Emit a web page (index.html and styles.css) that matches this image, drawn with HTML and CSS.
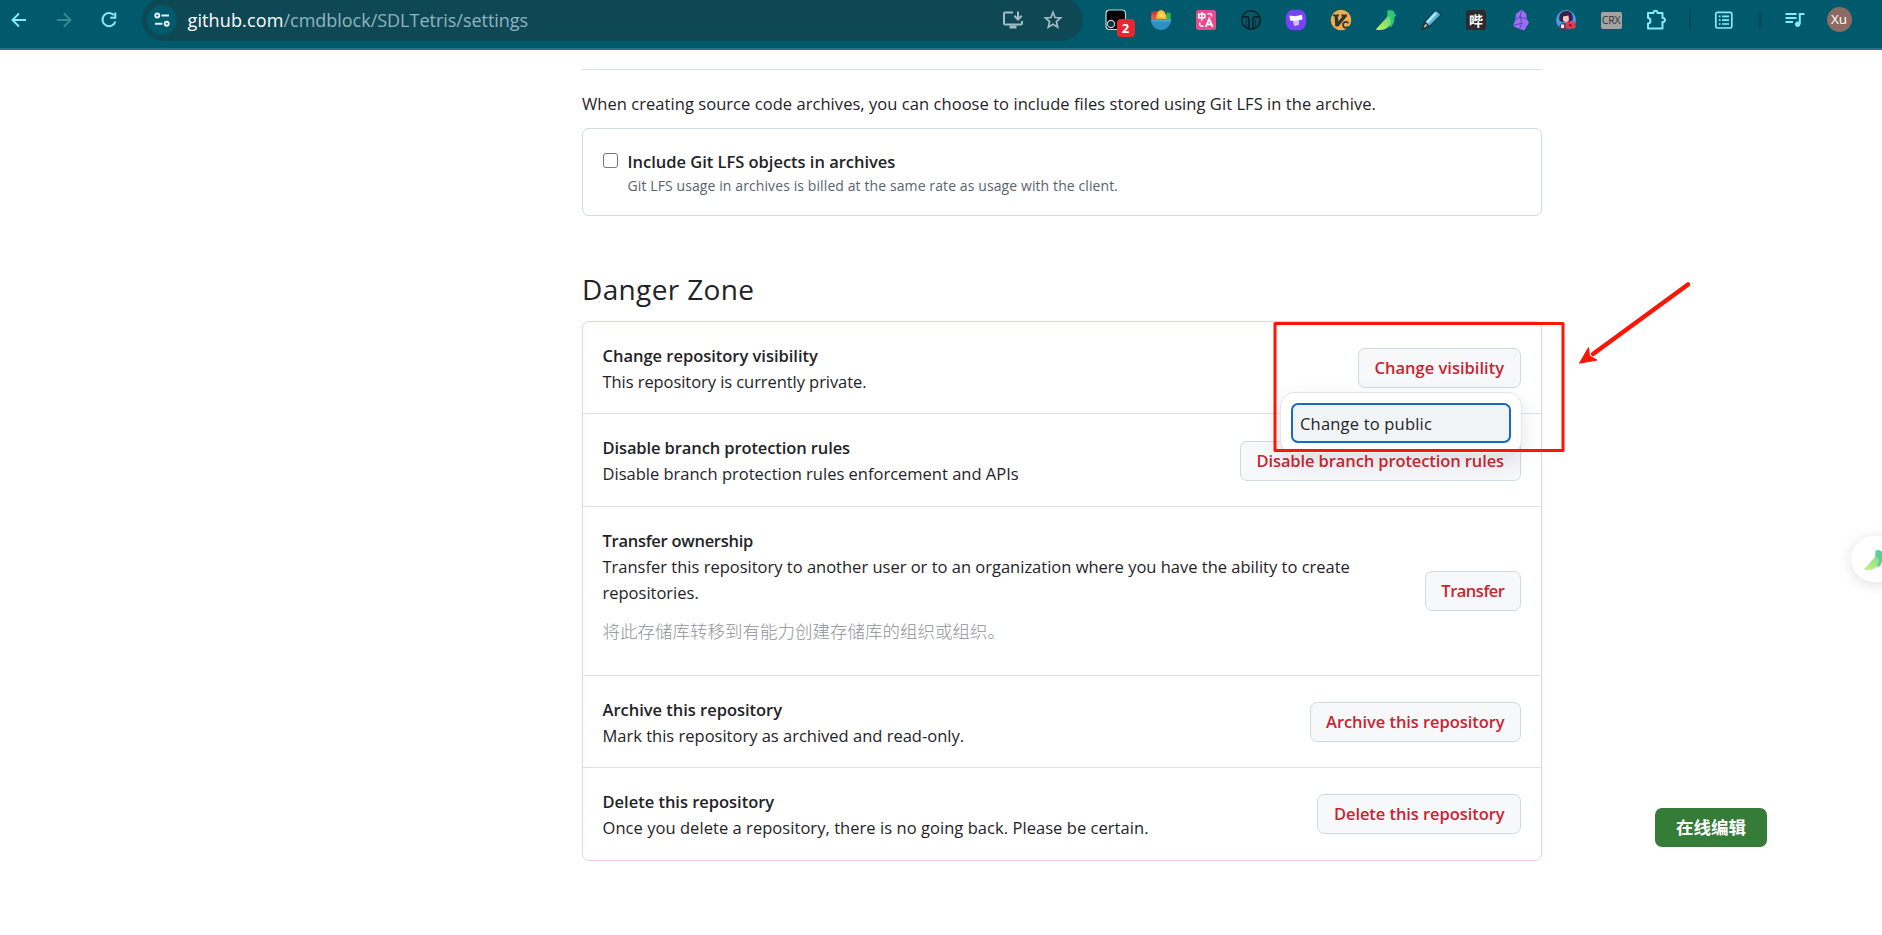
FILE: index.html
```html
<!DOCTYPE html>
<html lang="en">
<head>
<meta charset="utf-8">
<title>cmdblock/SDLTetris settings</title>
<link rel="stylesheet" href="styles.css">
</head>
<body>
<header class="toolbar">
  <nav class="nav">
    <span class="slot"><svg width="20" height="20" viewBox="0 0 20 20" fill="none" stroke="#86ebf8" stroke-width="1.9"><path d="M17 10H4M10 3.500L3.500 10L10 16.500"/></svg></span>
    <span class="slot"><svg width="20" height="20" viewBox="0 0 20 20" fill="none" stroke="#3b8794" stroke-width="1.900"><path d="M3 10H16M10 3.500L16.500 10L10 16.500"/></svg></span>
    <span class="slot"><svg width="20" height="20" viewBox="0 0 20 20" fill="none" stroke="#86ebf8" stroke-width="2"><path d="M15 5.200A6.600 6.600 0 1 0 16.400 11.500"/><path d="M16.300 2.600V7.700H11.200"/></svg></span>
  </nav>
  <div class="omnibox">
    <span class="chip"><svg width="18" height="18" viewBox="0 0 18 18" fill="none" stroke="#e6f6f8" stroke-width="1.900"><circle cx="4.300" cy="4.500" r="2"/><path d="M8.500 4.500H16M2 12.800H9.500"/><circle cx="13.700" cy="12.800" r="2"/></svg></span>
    <span class="url"><span class="host">github.com</span><span class="path">/cmdblock/SDLTetris/settings</span></span>
    <span class="omni-actions">
      <svg width="22" height="20" viewBox="0 0 22 20" fill="none" stroke="#a5bcc7" stroke-width="2"><path d="M11 2.600H3.200Q2 2.600 2 3.800V13.300Q2 14.500 3.200 14.500H18.800Q20 14.500 20 13.300V11M16 1.500V9M12.300 5.800L16 9.500L19.700 5.800"/><path d="M7.500 17H14.500" stroke-width="3"/></svg>
      <svg width="20" height="20" viewBox="0 0 20 20" fill="none" stroke="#a5bcc7" stroke-width="1.700"><path d="M10 2.300L12.100 7.500L17.600 8L13.400 11.600L14.700 17.100L10 14.200L5.300 17.100L6.600 11.600L2.400 8L7.900 7.500Z"/></svg>
    </span>
  </div>
  <div class="extensions">
    <span class="slot tamper">
      <svg width="22" height="22" viewBox="0 0 22 22"><rect x="1" y="1" width="19.500" height="19.500" rx="3.500" fill="#000" stroke="#c8d6da" stroke-width="1.200"/><circle cx="6" cy="15" r="3.600" fill="#0b3038" stroke="#b9d0d6" stroke-width="1.200"/></svg>
      <span class="badge">2</span>
    </span>
    <span class="slot"><svg width="22" height="22" viewBox="0 0 22 22"><path d="M1.200 3L6 2L9 5L8 11H1.800Z" fill="#c4403c"/><circle cx="3.500" cy="8" r="2.500" fill="#e0564c"/><path d="M14 10L18 2.500L19 4.500L21 4L20.500 11H14Z" fill="#36b34a"/><path d="M6 10Q6 1.500 11 1Q16.500 1.500 16.500 10Z" fill="#fbb829"/><path d="M8.500 8Q8.500 4 11.500 3.500Q14.500 4 14.500 8Z" fill="#ffd768"/><path d="M1 10.500H21C21 16.500 16.500 21 11 21S1 16.500 1 10.500Z" fill="#2e8fc0"/><path d="M1 10.500H21L20.700 12.500H1.300Z" fill="#4ba7d2"/></svg></span>
    <span class="slot"><svg width="22" height="22" viewBox="0 0 22 22"><rect x="1" y="1" width="20" height="20" rx="2.500" fill="#e54b8d"/><g fill="none" stroke="#fff" stroke-width="1.500"><path d="M3.800 5.300H9.700V8.700H3.800ZM6.750 3V11.800M12.500 4.800H15.200Q16.700 4.800 16.700 7.500M4.800 13.500V15.500Q4.800 17.500 8.500 17.300"/><path d="M10.700 18L14.200 9.800L17.700 18M12 15.300H16.500" stroke-width="1.800"/></g></svg></span>
    <span class="slot"><svg width="22" height="22" viewBox="0 0 22 22" fill="none" stroke="#0c1c20" stroke-width="1.500"><circle cx="11" cy="11" r="9.200"/><path d="M2.500 7.800H7Q9 7.800 9 10V20M19.500 7.800H15Q13 7.800 13 10V20"/><path d="M5.500 9.500Q6.500 10 6.500 12V18M16.500 9.500Q15.500 10 15.500 12V18" stroke-width=".7"/></svg></span>
    <span class="slot"><svg width="22" height="22" viewBox="0 0 22 22"><rect x=".8" y=".8" width="20.400" height="20.400" rx="7.500" fill="#7643f5"/><path d="M4.500 6.500L10 7.200L17 5.800L17.500 10.500L13.800 11.200L13.500 16L9 16.500L8.500 12L5 11.500Z" fill="#fff"/><path d="M8.500 11.800L13.800 11.200L13.500 16L9 16.500Z" fill="#cdbbfb"/></svg></span>
    <span class="slot"><svg width="22" height="22" viewBox="0 0 22 22"><circle cx="11" cy="11" r="10.300" fill="#f0ad4b"/><path d="M2.800 5.500H9V7.300H8L8.300 12.500L12.500 7.300H11.300V5.500H17V7.300L8.300 17.500H5.300L4.500 7.300H2.800Z" fill="#2b3a36"/><path d="M18.300 14.200A2.900 2.900 0 1 0 18.300 17.500" fill="none" stroke="#2b3a36" stroke-width="1.800"/></svg></span>
    <span class="slot"><svg width="22" height="22" viewBox="0 0 22 22"><use href="#bird"/></svg></span>
    <span class="slot"><svg width="22" height="22" viewBox="0 0 22 22"><path d="M4.500 13L14.500 2.200Q16 1 17.500 2.200L20 4.500Q21 5.800 20 7L9.500 17.500Z" fill="#52b6dc" stroke="#17394b" stroke-width="1.200"/><path d="M7 13.500L16 4" stroke="#bdeaf7" stroke-width="2.500"/><path d="M4.500 13L9.500 17.500L5 19.500L1.500 20.500L3 17Z" fill="#3f4a4c" stroke="#132d33"/><path d="M4.500 18L6.500 15.500" stroke="#c9c9bd" stroke-width="1.500"/></svg></span>
    <span class="slot"><span class="bili">哔</span></span>
    <span class="slot"><svg width="22" height="22" viewBox="0 0 22 22"><path d="M11.500 .5L16.500 5L16.500 9.500L19 13.500L14.500 21.200L9 20L3 17L5.300 10.500L6 5Z" fill="#9c6cf5"/><path d="M11.500 1L10 8L5.500 10.500M10 8L16.500 10M10 8L12 14L9.500 20M3.500 16.500L12 14" stroke="#4a3f9c" stroke-width=".8" fill="none"/></svg></span>
    <span class="slot"><svg width="22" height="22" viewBox="0 0 22 22"><circle cx="11" cy="11" r="10" fill="#4a98e6"/><path d="M4.500 11.500C3 4.500 8 1.500 12 2C17 2.500 18.500 7 17.500 11.500L14 13H7Z" fill="#3c1f45"/><path d="M8 7.500L13.500 6.500L14 11.500Q11 14.500 8 11.500Z" fill="#f6c6b8"/><path d="M4 19.500Q4 14 8.500 14H13L14 20.500Q9 22.500 4 19.500Z" fill="#5b3a68"/><path d="M6 15.500H9V19H6Z" fill="#eee"/><rect x="10.500" y="13" width="10" height="6.500" rx="1" fill="#e23a4e"/><path d="M14.300 14.500L17 16.200L14.300 18Z" fill="#3c1f45"/></svg></span>
    <span class="slot"><span class="crx">CRX</span></span>
    <span class="slot"><svg width="22" height="22" viewBox="0 0 22 22" fill="none" stroke="#86ebf8" stroke-width="2" stroke-linejoin="round"><path d="M3 4H8.500C8.300 1 12.700 1 12.500 4H17.500V9C20.800 8.800 20.800 13.200 17.500 13V19.500H3V14.500C6.300 14.500 6.300 9 3 9Z"/></svg></span>
  </div>
  <span class="divider"></span>
  <span class="tool"><svg width="20" height="20" viewBox="0 0 20 20" fill="none" stroke="#86ebf8" stroke-width="1.700"><rect x="1.800" y="2.300" width="16" height="15.700" rx="1.500"/><path d="M4.800 6.300H6.500M8 6.300H15M4.800 10.200H6.500M8 10.200H15M4.800 14H6.500M8 14H15"/></svg></span>
  <span class="divider"></span>
  <span class="tool music"><svg width="20" height="18" viewBox="0 0 20 18" fill="none" stroke="#86ebf8" stroke-width="2"><path d="M.5 3H11.500M.5 7H11.500M.5 11H8M14.800 13V3H19.500"/><circle cx="12.700" cy="13.200" r="2.300" fill="#86ebf8" stroke-width="1"/></svg></span>
  <span class="avatar">Xu</span>
  <span class="more"><i></i><i></i><i></i></span>
</header>

<main class="page">
  <hr class="rule">
  <p class="intro">When creating source code archives, you can choose to include files stored using Git LFS in the archive.</p>
  <section class="lfs">
    <span class="checkbox"></span>
    <div>
      <div class="title">Include Git LFS objects in archives</div>
      <div class="note">Git LFS usage in archives is billed at the same rate as usage with the client.</div>
    </div>
  </section>

  <h2 class="heading">Danger Zone</h2>
  <section class="danger">
    <div class="row">
      <div class="info">
        <div class="title">Change repository visibility</div>
        <div class="desc snug">This repository is currently private.</div>
      </div>
      <div class="menu-anchor">
        <button class="btn wide">Change visibility</button>
        <div class="menu"><div class="menu-item">Change to public</div></div>
      </div>
    </div>
    <div class="row low">
      <div class="info">
        <div class="title tight">Disable branch protection rules</div>
        <div class="desc">Disable branch protection rules enforcement and APIs</div>
      </div>
      <button class="btn wide">Disable branch protection rules</button>
    </div>
    <div class="row">
      <div class="info">
        <div class="title tighter">Transfer ownership</div>
        <div class="desc">Transfer this repository to another user or to an organization where you have the ability to create repositories.</div>
        <div class="translation" lang="zh">将此存储库转移到有能力创建存储库的组织或组织。</div>
      </div>
      <button class="btn tightest">Transfer</button>
    </div>
    <div class="row">
      <div class="info">
        <div class="title">Archive this repository</div>
        <div class="desc">Mark this repository as archived and read-only.</div>
      </div>
      <button class="btn">Archive this repository</button>
    </div>
    <div class="row">
      <div class="info">
        <div class="title">Delete this repository</div>
        <div class="desc loose">Once you delete a repository, there is no going back. Please be certain.</div>
      </div>
      <button class="btn">Delete this repository</button>
    </div>
  </section>
</main>

<svg class="annotation" width="430" height="180" viewBox="0 0 430 180">
  <rect x="4" y="43.500" width="288" height="127" fill="none" stroke="#fb1505" stroke-width="3" stroke-linejoin="round"/>
  <path d="M417 4.500L322 74" stroke="#fb1505" stroke-width="4.500" stroke-linecap="round"/>
  <path d="M308.500 83.200L317.500 67.500L318.500 76L326 80Z" fill="#fb1505" stroke="#fb1505"/>
</svg>

<div class="bubble">
  <svg width="22" height="22" viewBox="0 0 22 22">
    <defs>
      <linearGradient id="leaf" x1="0" y1="1" x2="1" y2="0"><stop offset="0" stop-color="#c6ee6b"/><stop offset="1" stop-color="#5fd96c"/></linearGradient>
      <g id="bird"><path d="M12.500 1.200H16Q19 1.200 19.500 4.500L21.200 6.500L19.300 8.500Q19.800 15 15 18.500L12 12Z" fill="#2cc877"/><path d="M.8 20.500L13 7Q17 9.500 15.500 14.500Q13 21 5.500 21Q2 21 .8 20.500Z" fill="url(#leaf)"/></g>
    </defs>
    <use href="#bird"/>
  </svg>
</div>
<button class="edit-online" lang="zh">在线编辑</button>
</body>
</html>
```
FILE: styles.css
```css
* { box-sizing: border-box; }
body {
  margin: 0;
  height: 935px;
  overflow: hidden;
  background: #fff;
  color: #1f2328;
  font: 16.5px/26px "Open Sans", "Noto Sans CJK SC", sans-serif;
  position: relative;
}
p, h2 { margin: 0; }
svg { display: block; flex: none; }

/* browser toolbar */
.toolbar {
  display: flex;
  height: 50px;
  padding-bottom: 9px;
  align-items: center;
  background: #005a6b;
  border-bottom: 2px solid #2a7487;
  overflow: hidden;
}
.nav, .extensions { display: flex; flex: none; }
.nav { margin-left: -4px; }
.slot {
  flex: none;
  display: flex;
  width: 45px;
  height: 22px;
  align-items: center;
  justify-content: center;
}
.extensions { margin-left: 10.5px; padding-top: 1px; }
.omnibox {
  display: flex;
  flex: none;
  align-items: center;
  width: 941px;
  height: 43px;
  margin-left: 11px;
  padding: 0 20px 0 5px;
  border-radius: 22px;
  background: #0e4855;
}
.chip {
  display: flex;
  width: 30px;
  height: 30px;
  align-items: center;
  justify-content: center;
  border-radius: 50%;
  background: #005a6b;
}
.url { margin-left: 10.5px; font-size: 18px; white-space: nowrap; }
.host { color: #fff; letter-spacing: .13px; }
.path { color: #8fb4c0; letter-spacing: -.02px; }
.omni-actions { display: flex; gap: 19px; margin-left: auto; align-items: center; }

.tamper { position: relative; }
.badge {
  position: absolute;
  left: 23px;
  top: 10px;
  width: 18px;
  height: 18px;
  border-radius: 4px;
  background: #e8282e;
  color: #fff;
  font-weight: 700;
  font-size: 13px;
  line-height: 18px;
  text-align: center;
}
.bili {
  width: 20px;
  height: 20px;
  border-radius: 3px;
  background: #2d2a2c;
  color: #fff;
  font: 700 14px/20px "Noto Sans CJK SC", sans-serif;
  text-align: center;
}
.crx {
  width: 21px;
  height: 17px;
  border-radius: 2px;
  background: #a3a3a3;
  color: #333;
  font-size: 10.5px;
  line-height: 17px;
  letter-spacing: -.2px;
  text-align: center;
}
.divider { flex: none; width: 2px; height: 20px; margin-left: 10px; background: #0e4855; }
.tool { display: flex; flex: none; margin-left: 23px; }
.tool + .divider { margin-left: 25px; }
.music { margin-left: 24px; }
.avatar {
  flex: none;
  width: 25px;
  height: 25px;
  margin-left: 22px;
  border-radius: 50%;
  background: #8d6b62;
  color: #fff;
  font-size: 13.5px;
  line-height: 25px;
  text-align: center;
}
.more { display: grid; flex: none; gap: 4px; margin-left: 30px; }
.more i { width: 3px; height: 3px; border-radius: 50%; background: #86ebf8; }

/* settings page */
.page { width: 960px; margin-left: 582px; padding-top: 19px; }
.rule { height: 1px; margin: 0; border: 0; background: #d8dee4; }
.intro { margin-top: 21px; letter-spacing: .053px; }
.lfs {
  display: flex;
  height: 88px;
  margin-top: 11px;
  padding: 20px;
  border: 1px solid #d1d9e0;
  border-radius: 7px;
}
.checkbox {
  width: 15px;
  height: 15px;
  margin: 4px 9.5px 0 0;
  border: 1px solid #767676;
  border-radius: 3px;
}
.title { font-weight: 600; letter-spacing: -.02px; white-space: nowrap; }
.note { color: #59636e; font-size: 14px; line-height: 22px; letter-spacing: .1px; }
.heading {
  margin-top: 53px;
  font-size: 28px;
  font-weight: 400;
  line-height: 40px;
  letter-spacing: .35px;
}
.danger {
  height: 540px;
  margin-top: 12px;
  border: 1px solid #f6cdd2;
  border-radius: 7px;
  display: grid;
  grid-template: 91px 93px 169px 92px 93px / minmax(0, 1fr);
}
.row {
  display: flex;
  align-items: center;
  justify-content: space-between;
  padding: 0 20px 0 19.5px;
}
.row + .row { border-top: 1px solid #dde1e6; }
.info { flex: 0 1 775px; min-width: 0; align-self: flex-start; padding-top: 21px; }
.desc { white-space: nowrap; }
.tighter + .desc { white-space: normal; }
.desc.snug { letter-spacing: -.065px; }
.desc.loose { letter-spacing: .051px; }
.title.tight { letter-spacing: -.106px; }
.title.tighter { letter-spacing: -.274px; }
.translation {
  margin-top: 12px;
  color: #8f9296;
  font: 300 17.5px/26px "Noto Sans CJK SC", sans-serif;
}
.btn {
  flex: none;
  height: 40px;
  padding: 0 15.5px;
  border: 1px solid #d1d9e0;
  border-radius: 7px;
  background: #f6f8fa;
  color: #cb2431;
  font: 600 16.5px/38px "Open Sans", sans-serif;
  letter-spacing: -.07px;
  white-space: nowrap;
}
.btn.wide { padding: 0 16px; letter-spacing: 0; }
.low .btn.wide { margin-top: 1px; letter-spacing: -.106px; }
.btn.tightest { letter-spacing: -.5px; }
.menu-anchor { position: relative; z-index: 1; flex: none; display: flex; }
.menu {
  position: absolute;
  top: 44px;
  right: -1px;
  width: 242px;
  height: 62px;
  padding: 10px;
  border: 1px solid #e2e6ea;
  border-radius: 14px;
  background: #fff;
  box-shadow: 0 8px 20px rgba(66, 74, 83, .14);
}
.menu-item {
  height: 40px;
  padding-left: 7px;
  border: 2px solid #1868c4;
  border-radius: 7px;
  background: #f1f4f7;
  line-height: 37px;
  letter-spacing: .19px;
}

/* overlays */
.annotation { position: absolute; left: 1271px; top: 280px; z-index: 2; }
.bubble {
  position: absolute;
  left: 1851px;
  top: 536px;
  width: 60px;
  height: 46px;
  padding: 13px 0 0 12px;
  border-radius: 23px;
  background: #fff;
  box-shadow: 0 2px 14px rgba(0, 0, 0, .13);
}
.bubble svg { opacity: .8; }
.edit-online {
  position: absolute;
  left: 1655px;
  top: 808px;
  width: 112px;
  height: 39px;
  padding: 0 0 2px;
  border: 0;
  border-radius: 7px;
  background: #357c38;
  color: #fff;
  font: 700 17.5px/37px "Noto Sans CJK SC", sans-serif;
  text-align: center;
}
```
